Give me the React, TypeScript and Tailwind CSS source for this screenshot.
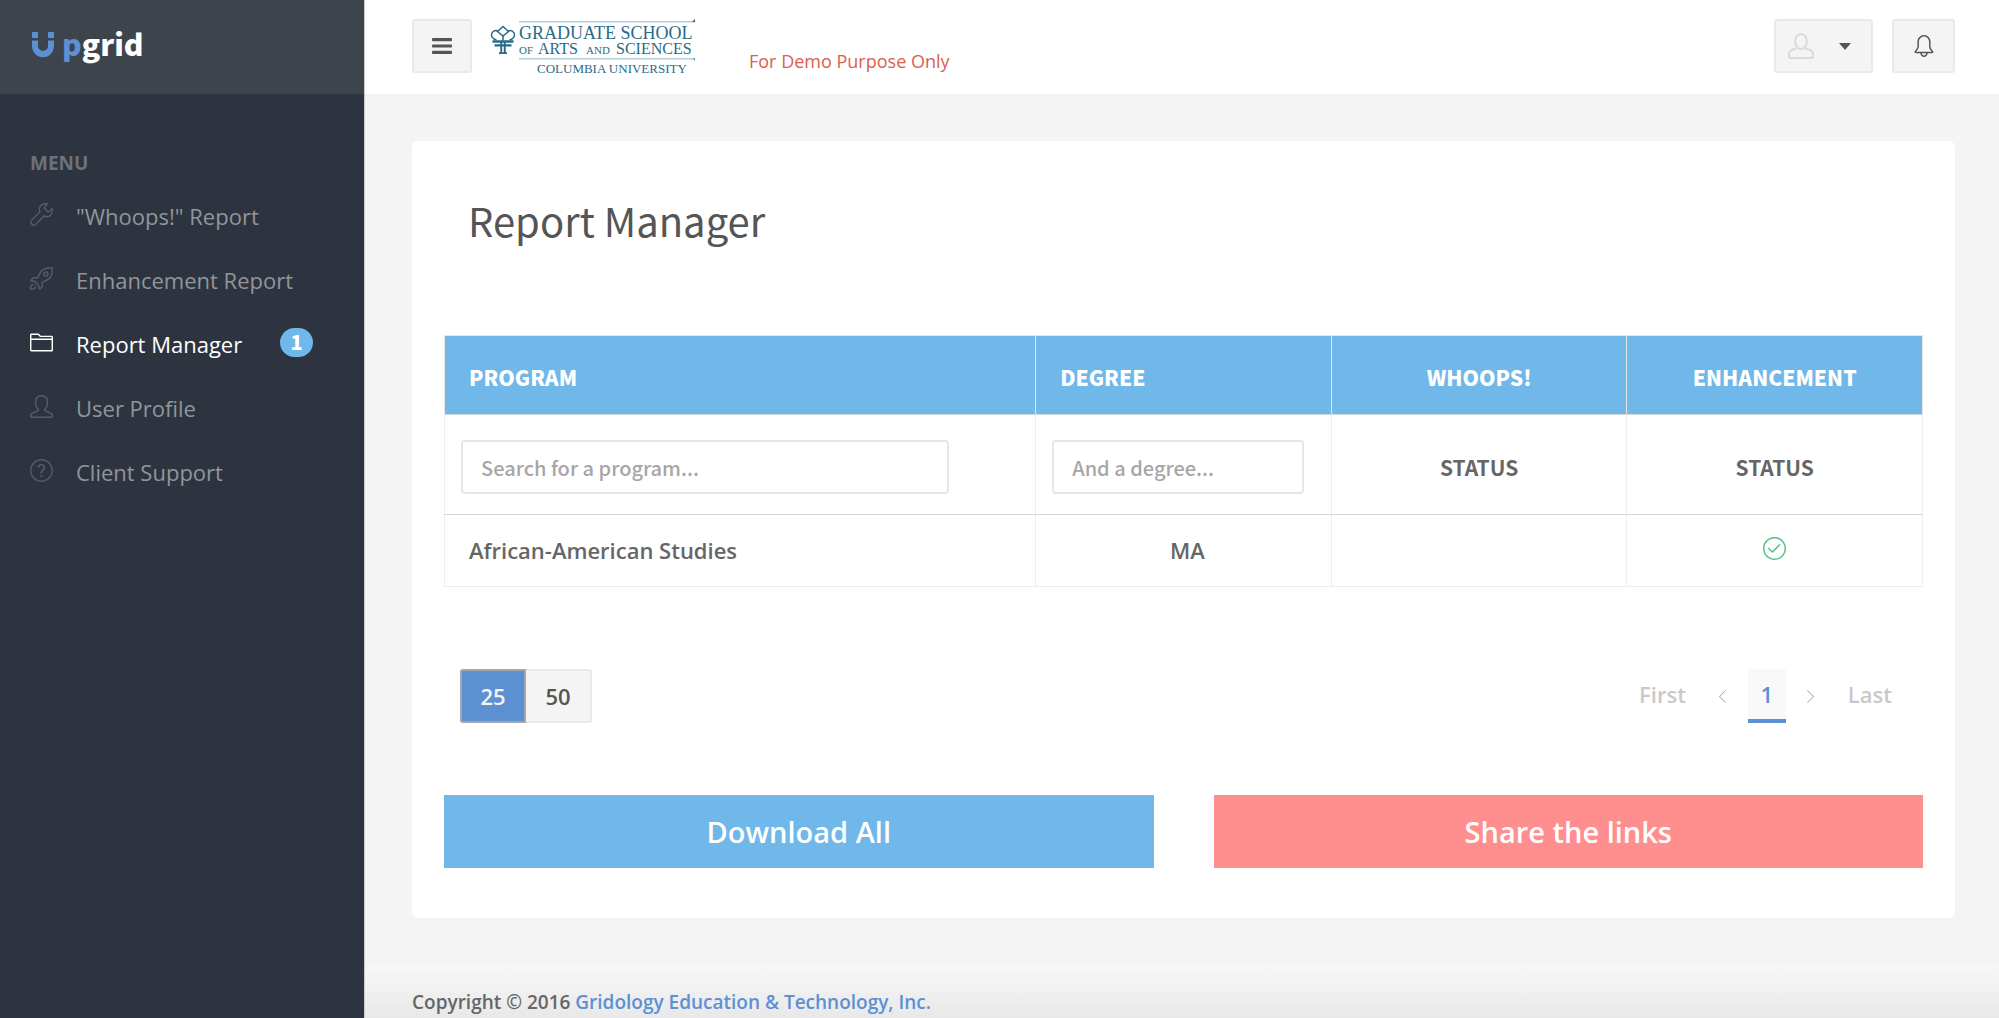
import React from "react";
import {
  SlArrowLeft,
  SlArrowRight,
  SlBell,
  SlCheck,
  SlFolderAlt,
  SlQuestion,
  SlRocket,
  SlUser,
  SlWrench,
} from "react-icons/sl";

type MenuItem = {
  label: string;
  icon: React.ComponentType<{ className?: string }>;
  active?: boolean;
  badge?: number;
};

const menu: MenuItem[] = [
  { label: '"Whoops!" Report', icon: SlWrench },
  { label: "Enhancement Report", icon: SlRocket },
  { label: "Report Manager", icon: SlFolderAlt, active: true, badge: 1 },
  { label: "User Profile", icon: SlUser },
  { label: "Client Support", icon: SlQuestion },
];

const rows = [{ program: "African-American Studies", degree: "MA", whoops: false, enhancement: true }];

function BrandMark() {
  return (
    <svg className="h-[26px] w-[22px]" viewBox="0 0 22 26" fill="#5d90d3" aria-hidden="true">
      <rect x="0" y="0" width="6" height="6" />
      <rect x="16" y="0" width="6" height="6" />
      <path d="M0 8.500h6v5.500a5 5 0 0 0 10 0V8.500h6v5.500a11 11.300 0 0 1-22 0z" />
    </svg>
  );
}

function UniversityLogo() {
  return (
    <svg
      className="h-[58px] w-[207px] shrink-0"
      viewBox="0 0 207 58"
      role="img"
      aria-label="Graduate School of Arts and Sciences, Columbia University"
    >
      <g stroke="#b4cdd8" strokeWidth="1.500">
        <path d="M31 2.700h175" />
        <path d="M31 39.700h175" />
      </g>
      <path d="M204 3l3-3v3zM205 39.500l2 2v-2z" fill="#1d5f7e" />
      <g fill="none" stroke="#2b6a86" strokeWidth="1.500">
        <path d="M15 17l-5.500-4.500L15 7.500l5.500 5z" />
        <path d="M10 12c-3-1.500-6.500.5-6.500 4 0 2.500 2 4 5 5M20 12c3-1.500 6.500.5 6.500 4 0 2.500-2 4-5 5" />
        <path d="M15 16.500v5" />
      </g>
      <g fill="#2b6a86">
        <path d="M4.500 21.300h21v2.400h-21zM6.500 25.300h17v2.200h-17z" />
        <path d="M12.300 23h1.900v11h-1.900zM15.800 23h1.900v11h-1.900zM11 33.300h8v1.700h-8z" />
      </g>
      <g fill="#2b6a86" fontFamily="'Liberation Serif', serif">
        <text x="31" y="20" fontSize="18">GRADUATE SCHOOL</text>
        <text x="31" y="35" fontSize="11">OF</text>
        <text x="50" y="35" fontSize="16">ARTS</text>
        <text x="98" y="35" fontSize="11">AND</text>
        <text x="128" y="35" fontSize="16">SCIENCES</text>
        <text x="49" y="54" fontSize="13">COLUMBIA UNIVERSITY</text>
      </g>
    </svg>
  );
}

function AvatarIcon() {
  return (
    <svg className="h-[26px] w-[26px]" viewBox="0 0 26 26" fill="none" stroke="#dadada" strokeWidth="2" aria-hidden="true">
      <ellipse cx="13" cy="8.500" rx="5.800" ry="7.500" />
      <path d="M8.500 15.500C4 16.200 1 18.200 1 21v2c0 1.200.8 2 2 2h20c1.200 0 2-.8 2-2v-2c0-2.800-3-4.800-7.500-5.500" />
    </svg>
  );
}

function MenuBars() {
  return (
    <svg className="h-4 w-5" viewBox="0 0 20 16" fill="#555" aria-hidden="true">
      <rect y="0" width="20" height="3.200" rx="0.800" />
      <rect y="6.400" width="20" height="3.200" rx="0.800" />
      <rect y="12.800" width="20" height="3.200" rx="0.800" />
    </svg>
  );
}

function Sidebar() {
  return (
    <aside className="w-[365px] shrink-0 border-r border-[#c9cbce] bg-[#2d343f]">
      <a
        href="#home"
        className="flex h-[94px] items-center bg-[#3e444c] pb-1 pl-8 font-['Noto_Sans_CJK_SC',sans-serif] text-[30px] leading-[40px] font-black text-white"
        aria-label="Upgrid"
      >
        <BrandMark />
        <span className="pb-1 pl-2">
          <span className="text-[#5d90d3]">p</span>grid
        </span>
      </a>
      <nav className="pt-[57px]" aria-label="Main">
        <h2 className="pl-[30px] text-[19px] leading-[24px] font-bold text-[#6c727b]">MENU</h2>
        <ul className="pt-[9px]">
          {menu.map(({ label, icon: Icon, active, badge }) => (
            <li key={label}>
              <a
                href="#section"
                aria-current={active ? "page" : undefined}
                className={`flex h-16 items-center pl-[30px] text-[22px] leading-[30px] font-medium ${
                  active ? "text-white" : "text-[#92959a]"
                }`}
              >
                <Icon className={`mb-[3px] h-[23px] w-[23px] shrink-0 ${active ? "text-white" : "text-[#565c67]"}`} />
                <span className="pl-[23px]">{label}</span>
                {badge !== undefined && (
                  <span className="mb-[3px] ml-[38px] flex h-[29px] w-[33px] items-center justify-center rounded-full bg-[#70b7ea] pb-0.5 font-['Noto_Sans_CJK_SC',sans-serif] text-[20px] leading-[24px] font-black text-white">
                    {badge}
                  </span>
                )}
              </a>
            </li>
          ))}
        </ul>
      </nav>
    </aside>
  );
}

function TopBar() {
  return (
    <header className="flex h-[94px] shrink-0 items-start bg-white pt-[19px] pr-11 pl-[47px]">
      <button
        type="button"
        aria-label="Toggle menu"
        className="flex h-[54px] w-[60px] items-center justify-center rounded-[3px] border-2 border-[#e9e9e9] bg-[#f4f4f4]"
      >
        <MenuBars />
      </button>
      <div className="pl-4">
        <UniversityLogo />
      </div>
      <p className="pt-[30px] pl-[54px] text-[18px] leading-[24px] text-[#d9604f]">For Demo Purpose Only</p>
      <div className="ml-auto flex gap-[19px]">
        <button
          type="button"
          aria-label="Account"
          className="flex h-[54px] w-[99px] items-center gap-[25px] rounded-[3px] border-2 border-[#e9e9e9] bg-[#f4f4f4] pl-3"
        >
          <AvatarIcon />
          <svg className="h-[7px] w-3" viewBox="0 0 12 7" fill="#555" aria-hidden="true">
            <path d="M0 0h12L6 7z" />
          </svg>
        </button>
        <button
          type="button"
          aria-label="Notifications"
          className="flex h-[54px] w-[63px] items-center justify-center rounded-[3px] border-2 border-[#e9e9e9] bg-[#f4f4f4] text-[#555]"
        >
          <SlBell className="h-[22px] w-[22px]" />
        </button>
      </div>
    </header>
  );
}

const headCell = "h-[79px] border border-[#e6e6e6] border-b-[#d6d6d6] pt-1 text-[21px] leading-[28px] font-black text-white";
const filterCell = "h-[100px] border border-[#eee] border-b-[#d6d6d6] pt-[5px]";
const bodyCell = "h-[72px] border border-[#eee] pb-0.5 text-[22px] leading-[30px] font-semibold text-[#666]";
const field =
  "block h-[54px] rounded-[4px] border-2 border-[#e6e6e6] bg-white px-[18px] font-['Noto_Sans_CJK_SC',sans-serif] text-[20px] leading-[28px] font-medium text-[#666] outline-none placeholder:text-[#a6a6a6] placeholder:opacity-100";

function ReportTable() {
  return (
    <table className="w-full table-fixed border-collapse">
      <colgroup>
        <col className="w-2/5" />
        <col className="w-1/5" />
        <col className="w-1/5" />
        <col className="w-1/5" />
      </colgroup>
      <thead className="font-['Noto_Sans_CJK_SC',sans-serif]">
        <tr className="bg-[#70b7ea]">
          <th scope="col" className={`${headCell} pl-6 text-left`}>PROGRAM</th>
          <th scope="col" className={`${headCell} pl-6 text-left`}>DEGREE</th>
          <th scope="col" className={headCell}>WHOOPS!</th>
          <th scope="col" className={headCell}>ENHANCEMENT</th>
        </tr>
        <tr className="text-[21px] leading-[28px] text-[#666]">
          <td className={`${filterCell} px-4`}>
            <input type="text" aria-label="Search for a program" placeholder="Search for a program..." className={`${field} w-7/8`} />
          </td>
          <td className={`${filterCell} px-4`}>
            <input type="text" aria-label="Search for a degree" placeholder="And a degree..." className={`${field} w-[96%]`} />
          </td>
          <th scope="col" className={`${filterCell} font-bold`}>STATUS</th>
          <th scope="col" className={`${filterCell} font-bold`}>STATUS</th>
        </tr>
      </thead>
      <tbody>
        {rows.map((row) => (
          <tr key={row.program}>
            <td className={`${bodyCell} pl-6`}>{row.program}</td>
            <td className={`${bodyCell} pl-2 text-center`}>{row.degree}</td>
            <td className={bodyCell}>{row.whoops && <SlCheck className="mx-auto h-[23px] w-[23px] text-[#4cc482]" />}</td>
            <td className={bodyCell}>
              {row.enhancement && <SlCheck className="mx-auto mb-0.5 h-[23px] w-[23px] text-[#4cc482]" aria-label="Complete" />}
            </td>
          </tr>
        ))}
      </tbody>
    </table>
  );
}

function TableControls() {
  return (
    <div className="flex items-start justify-between pr-[19px] pl-4 text-[22px] leading-[30px] font-semibold">
      <div className="flex" role="group" aria-label="Rows per page">
        <button type="button" aria-pressed="true" className="h-[54px] w-[66px] rounded-l-[3px] border-2 border-[#a3a8ae] bg-[#5d90d3] text-[#f4f4f4]">
          25
        </button>
        <button type="button" aria-pressed="false" className="h-[54px] w-[66px] rounded-r-[3px] border-2 border-l-0 border-[#e9e9e9] bg-[#f4f4f4] text-[#555]">
          50
        </button>
      </div>
      <nav className="flex text-[#c9c9c9]" aria-label="Pagination">
        <button type="button" className="h-[50px] px-3">First</button>
        <button type="button" aria-label="Previous page" className="flex h-[54px] w-[50px] items-center justify-center text-[#aaa]">
          <SlArrowLeft className="h-[13px] w-[13px]" />
        </button>
        <button type="button" aria-current="page" className="h-[54px] w-[38px] border-b-4 border-[#5d90d3] bg-[#f9f9f9] text-[#5d90d3]">
          1
        </button>
        <button type="button" aria-label="Next page" className="flex h-[54px] w-[50px] items-center justify-center text-[#aaa]">
          <SlArrowRight className="h-[13px] w-[13px]" />
        </button>
        <button type="button" className="h-[50px] px-3">Last</button>
      </nav>
    </div>
  );
}

export default function App() {
  return (
    <div className="flex min-h-screen bg-[#f4f4f4] font-['Open_Sans',sans-serif] text-[#666]">
      <Sidebar />
      <div className="flex min-w-0 flex-1 flex-col">
        <TopBar />
        <main className="grow border-t-4 border-[#f2f2f2] pt-[43px] pr-11 pb-12 pl-[47px]">
          <section className="rounded-[6px] bg-white px-8 pt-[55px] pb-[50px]">
            <h1 className="pb-[91px] pl-6 font-['Noto_Sans_CJK_SC',sans-serif] text-[40px] leading-[48px] font-normal text-[#555]">
              Report Manager
            </h1>
            <ReportTable />
            <div className="pt-[82px]">
              <TableControls />
            </div>
            <div className="grid grid-cols-2 gap-[60px] pt-[72px] text-[29px] leading-[40px] font-semibold text-white">
              <button type="button" className="h-[73px] bg-[#70b7ea]">Download All</button>
              <button type="button" className="h-[73px] bg-[#ff8e8e]">Share the links</button>
            </div>
          </section>
        </main>
        <footer className="h-[53px] bg-linear-to-b from-[#f7f7f7] to-[#e8e8e8] pt-[23px] pl-[47px] text-[19px] leading-[26px] font-semibold">
          Copyright © 2016{" "}
          <a href="#company" className="text-[#5d90d3]">
            Gridology Education &amp; Technology, Inc.
          </a>
        </footer>
      </div>
    </div>
  );
}
